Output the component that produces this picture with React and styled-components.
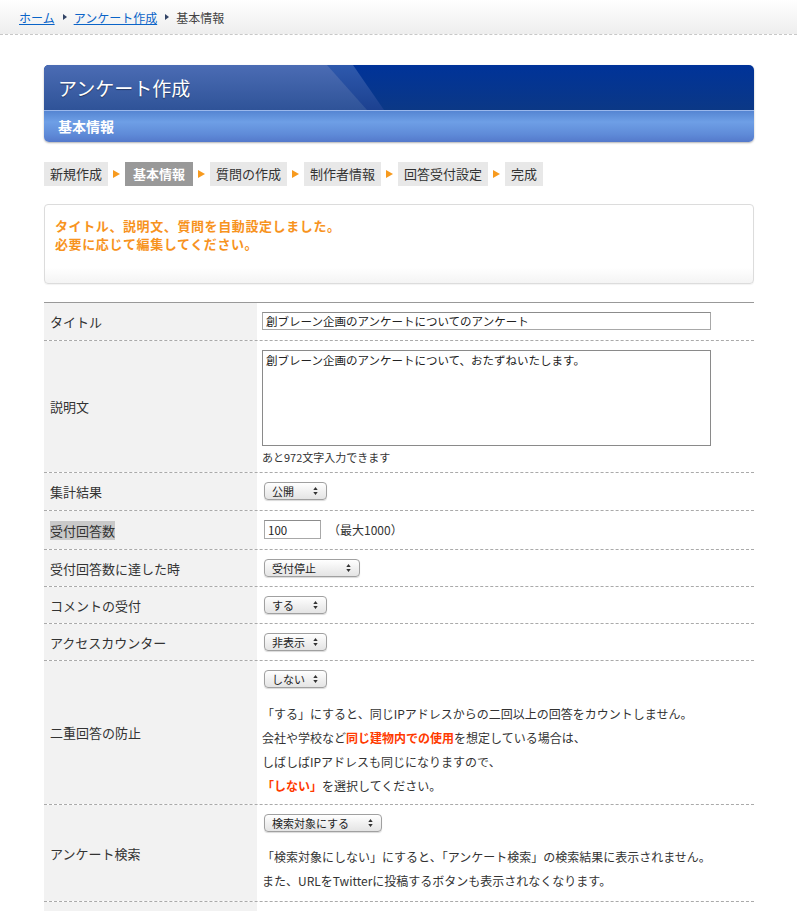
import React from 'react'
import styled, { createGlobalStyle, css } from 'styled-components'

const GlobalStyle = createGlobalStyle`
    body {
        margin: 0;
        background: #fff;
        color: #333;
        font-family: "Noto Sans CJK JP", "Noto Sans", sans-serif;
    }
`

const steps = ['新規作成', '基本情報', '質問の作成', '制作者情報', '回答受付設定', '完成']

const Select = ({ width, children }) => (
    <SelectWrap $width={width}>
        <SelectField defaultValue={children}>
            <option>{children}</option>
        </SelectField>
        <SelectArrow viewBox="0 0 5 9">
            <path d="M0 3.5 L2.5 0 L5 3.5 Z M0 5.5 L2.5 9 L5 5.5 Z" fill="#333" />
        </SelectArrow>
    </SelectWrap>
)

export default function App() {
    return (
        <>
            <GlobalStyle />
            <Breadcrumb>
                <CrumbLink href="#">ホーム</CrumbLink>
                <CrumbSep />
                <CrumbLink href="#">アンケート作成</CrumbLink>
                <CrumbSep />
                <CrumbCurrent>基本情報</CrumbCurrent>
            </Breadcrumb>

            <Page>
                <Panel>
                    <PanelTitle>
                        <PanelTitleText>アンケート作成</PanelTitleText>
                    </PanelTitle>
                    <PanelSub>基本情報</PanelSub>
                </Panel>

                <Steps>
                    {steps.map((s, i) => (
                        <React.Fragment key={s}>
                            {i > 0 && <StepArrow />}
                            <Step $active={i === 1}>{s}</Step>
                        </React.Fragment>
                    ))}
                </Steps>

                <Message>
                    タイトル、説明文、質問を自動設定しました。<br />
                    必要に応じて編集してください。
                </Message>

                <Table>
                    <Row>
                        <Label>タイトル</Label>
                        <Cell>
                            <TextInput
                                type="text"
                                defaultValue="創ブレーン企画のアンケートについてのアンケート"
                            />
                        </Cell>
                    </Row>
                    <Row>
                        <Label>説明文</Label>
                        <Cell $pb="8px">
                            <TextArea defaultValue="創ブレーン企画のアンケートについて、おたずねいたします。" />
                            <Remaining>あと972文字入力できます</Remaining>
                        </Cell>
                    </Row>
                    <Row>
                        <Label>集計結果</Label>
                        <Cell><Select width={63}>公開</Select></Cell>
                    </Row>
                    <Row>
                        <Label><Selected>受付回答数</Selected></Label>
                        <Cell>
                            <Inline>
                                <CountInput type="text" defaultValue="100" />
                                <Hint>（最大1000）</Hint>
                            </Inline>
                        </Cell>
                    </Row>
                    <Row>
                        <Label>受付回答数に達した時</Label>
                        <Cell $pb="9px"><Select width={96}>受付停止</Select></Cell>
                    </Row>
                    <Row>
                        <Label>コメントの受付</Label>
                        <Cell $pb="9px"><Select width={63}>する</Select></Cell>
                    </Row>
                    <Row>
                        <Label>アクセスカウンター</Label>
                        <Cell $pb="9px"><Select width={63}>非表示</Select></Cell>
                    </Row>
                    <Row>
                        <Label>二重回答の防止</Label>
                        <Cell $pb="6px">
                            <Select width={63}>しない</Select>
                            <Note $mt="14px">
                                「する」にすると、同じIPアドレスからの二回以上の回答をカウントしません。<br />
                                会社や学校など<Strong>同じ建物内での使用</Strong>を想定している場合は、<br />
                                しばしばIPアドレスも同じになりますので、<br />
                                <Strong>「しない」</Strong>を選択してください。
                            </Note>
                        </Cell>
                    </Row>
                    <Row>
                        <Label>アンケート検索</Label>
                        <Cell $pb="8px">
                            <Select width={118}>検索対象にする</Select>
                            <Note $mt="13px">
                                「検索対象にしない」にすると、「アンケート検索」の検索結果に表示されません。<br />
                                また、URLをTwitterに投稿するボタンも表示されなくなります。
                            </Note>
                        </Cell>
                    </Row>
                    <Row $minHeight={20}>
                        <Label />
                        <Cell />
                    </Row>
                </Table>
            </Page>
        </>
    )
}

const Breadcrumb = styled.nav`
    display: flex;
    align-items: center;
    height: 34px;
    padding-left: 19px;
    background: linear-gradient(to bottom, #ffffff, #eeeeee);
    border-bottom: 1px dashed #c8c8c8;
    font-size: 12px;
`

const CrumbLink = styled.a`
    color: #0a64c8;
    text-decoration: underline;
`

const CrumbSep = styled.span`
    width: 0;
    height: 0;
    margin: 0 7px 0 8px;
    border-top: 3px solid transparent;
    border-bottom: 3px solid transparent;
    border-left: 4px solid #334466;
`

const CrumbCurrent = styled.span`
    color: #444;
`

const Page = styled.main`
    width: 710px;
    margin: 30px 0 0 44px;
`

const Panel = styled.section`
    border-radius: 5px;
    overflow: hidden;
    box-shadow: 0 1px 2px rgba(0, 0, 0, 0.3);
`

const PanelTitle = styled.div`
    position: relative;
    display: flex;
    align-items: center;
    height: 45px;
    padding-left: 14px;
    background: linear-gradient(to bottom, #003399, #0b3886);

    &::before,
    &::after {
        content: '';
        position: absolute;
        inset: 0;
    }

    &::before {
        background: linear-gradient(to bottom, #2e59ad, #1c4190);
        clip-path: polygon(0 0, 309px 0, 340px 100%, 0 100%);
    }

    &::after {
        background: linear-gradient(to bottom, #4b6cb4, #2f5398);
        clip-path: polygon(0 0, 283px 0, 323px 100%, 0 100%);
    }
`

const PanelTitleText = styled.h1`
    position: relative;
    z-index: 1;
    margin: 0;
    color: #fff;
    font-size: 19px;
    font-weight: normal;
    text-shadow: 0 1px 1px rgba(0, 0, 0, 0.4);
`

const PanelSub = styled.h2`
    margin: 0;
    height: 31px;
    line-height: 30px;
    padding-left: 14px;
    border-top: 1px solid #9ab8ec;
    background: linear-gradient(to bottom, #5585d2 0%, #6e9fe6 35%, #5f8bd8 75%, #5479cb 100%);
    color: #fff;
    font-size: 14px;
    font-weight: bold;
`

const Steps = styled.ol`
    display: flex;
    align-items: center;
    margin: 20px 0 0;
    padding: 0;
    list-style: none;
`

const Step = styled.li`
    height: 24px;
    line-height: 24px;
    padding: 0 6px;
    background: #e8e8e8;
    color: #333;
    font-size: 13px;

    ${p => p.$active && css`
        padding: 0 8px;
        background: #999;
        color: #fff;
        font-weight: bold;
    `}
`

const StepArrow = styled.span`
    width: 0;
    height: 0;
    margin: 0 5px;
    border-top: 4.5px solid transparent;
    border-bottom: 4.5px solid transparent;
    border-left: 7px solid #f79a1e;
`

const Message = styled.div`
    box-sizing: border-box;
    height: 80px;
    margin-top: 18px;
    padding: 12px 10px 0;
    border: 1px solid #dcdcdc;
    border-radius: 4px;
    background: linear-gradient(to bottom, #fff 80%, #f4f4f4);
    box-shadow: 0 1px 1px rgba(0, 0, 0, 0.05);
    color: #f7931e;
    font-size: 13px;
    font-weight: bold;
    line-height: 18px;
    letter-spacing: 0.6px;
`

const Table = styled.div`
    margin-top: 18px;
    border-top: 1px solid #999;
`

const Row = styled.div`
    display: grid;
    grid-template-columns: 213px 1fr;
    min-height: ${p => (p.$minHeight ? `${p.$minHeight}px` : 'auto')};
    border-bottom: 1px dashed #aaa;
`

const Label = styled.div`
    display: flex;
    align-items: center;
    padding-left: 6px;
    background: #f2f2f2;
    color: #333;
    font-size: 13px;
`

const Selected = styled.span`
    background: #c9c9c9;
`

const Cell = styled.div`
    padding: ${p => p.$pt || '9px'} 0 ${p => p.$pb || '10px'} 5px;
    font-size: 12px;
`

const fieldBase = css`
    box-sizing: border-box;
    border: 1px solid #a8a8a8;
    border-top-color: #8c8c8c;
    background: #fff;
    color: #222;
    font-family: inherit;
    font-size: 11.5px;
    outline: none;
`

const TextInput = styled.input`
    ${fieldBase};
    display: block;
    width: 449px;
    height: 18px;
    padding: 0 3px;
`

const TextArea = styled.textarea`
    ${fieldBase};
    display: block;
    width: 449px;
    height: 96px;
    padding: 2px 3px;
    border-color: #8a8a8a;
    resize: none;
    line-height: 14px;
`

const Remaining = styled.div`
    margin-top: 4px;
    line-height: 14px;
    font-size: 11px;
`

const Inline = styled.div`
    display: flex;
    align-items: center;
`

const CountInput = styled.input`
    ${fieldBase};
    width: 57px;
    height: 19px;
    margin-left: 2px;
    padding: 0 3px;
`

const Hint = styled.span`
    margin-left: 7px;
    font-size: 12px;
`

const SelectWrap = styled.div`
    position: relative;
    width: ${p => p.$width}px;
    height: 18px;
    margin-left: 2px;
`

const SelectField = styled.select`
    appearance: none;
    box-sizing: border-box;
    width: 100%;
    height: 100%;
    padding: 0 0 0 7px;
    border: 1px solid #a0a0a0;
    border-radius: 4px;
    background: linear-gradient(to bottom, #ffffff, #f1f1f1 50%, #e4e4e4);
    box-shadow: 0 1px 1px rgba(0, 0, 0, 0.15);
    color: #222;
    font-family: inherit;
    font-size: 11px;
    line-height: 16px;
`

const SelectArrow = styled.svg`
    position: absolute;
    top: 5px;
    right: 9px;
    width: 5px;
    height: 8px;
    pointer-events: none;
`

const Note = styled.p`
    margin: ${p => p.$mt} 0 0;
    line-height: 24px;
    font-size: 12px;
    color: #333;
`

const Strong = styled.strong`
    color: #ff3a00;
`
